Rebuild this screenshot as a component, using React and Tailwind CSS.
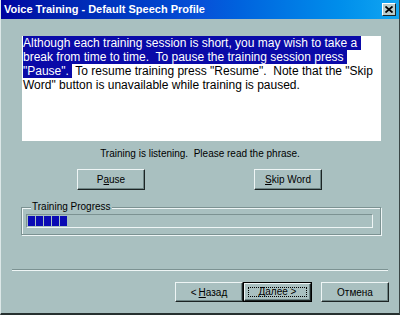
import React from 'react'

const font = { fontFamily: '"Liberation Sans", Arial, sans-serif' }

function Button({ children, className = '', isDefault = false }) {
  if (isDefault) {
    return (
      <div className={`h-[20px] border border-black ${className}`}>
        <div className="h-full flex items-center justify-center border-t border-l border-t-[#eef5f5] border-l-[#eef5f5] border-r border-b border-r-[#1c2424] border-b-[#1c2424] shadow-[inset_-1px_-1px_0_#6f8585]">
          <span className="flex items-center justify-center w-[calc(100%-6px)] h-[calc(100%-6px)] border border-dotted border-black leading-none">
            {children}
          </span>
        </div>
      </div>
    )
  }
  return (
    <div
      className={`flex items-center justify-center border-t border-l border-t-[#eef5f5] border-l-[#eef5f5] border-r border-b border-r-[#1c2424] border-b-[#1c2424] shadow-[inset_-1px_-1px_0_#6f8585] ${className}`}
    >
      {children}
    </div>
  )
}

export default function App() {
  const hl = 'bg-[#0a0aa8] text-white'

  return (
    <div
      className="w-[400px] h-[315px] bg-[#a9c0c0] border-l border-l-[#dde8e8] border-r border-r-[#3a4646] border-b-2 border-b-[#26302f] flex flex-col text-black text-[10px]"
      style={font}
    >
      {/* Title bar */}
      <div className="h-[19px] flex items-center justify-between pl-[3px] pr-[3px] bg-gradient-to-r from-[#0000a0] via-[#0850d8] to-[#12a6f2]">
        <span className="text-white font-bold text-[11px] leading-none">Voice Training - Default Speech Profile</span>
        <div className="w-[14px] h-[13px] flex items-center justify-center bg-[#b9cccc] border-t border-l border-t-white border-l-white border-r border-b border-r-[#1c2424] border-b-[#1c2424]">
          <svg width="8" height="7" viewBox="0 0 8 7">
            <path d="M0.5 0.5 L7.5 6.5 M7.5 0.5 L0.5 6.5" stroke="#000" strokeWidth="1.8" />
          </svg>
        </div>
      </div>

      {/* Instruction text */}
      <div className="mt-[17px] ml-[21px] w-[359px] h-[105px] bg-white pl-[1px] text-[12px] leading-[14px] whitespace-pre">
        <div><span className={hl}>Although each training session is short, you may wish to take a </span></div>
        <div><span className={hl}>break from time to time.  To pause the training session press </span></div>
        <div><span className={hl}>"Pause". </span> To resume training press "Resume".  Note that the "Skip</div>
        <div>Word" button is unavailable while training is paused.</div>
      </div>

      {/* Status */}
      <div className="mt-[6px] h-[14px] leading-[14px] text-center whitespace-pre">
        Training is listening.  Please read the phrase.
      </div>

      {/* Pause / Skip */}
      <div className="mt-[8px] ml-[76px] flex gap-[109px]">
        <Button className="w-[68px] h-[21px]">
          P<span className="underline">a</span>use
        </Button>
        <Button className="w-[68px] h-[21px]">
          <span className="underline">S</span>kip Word
        </Button>
      </div>

      {/* Progress group */}
      <fieldset className="mt-[11px] ml-[20px] w-[360px] border border-[#7c9292] shadow-[inset_1px_1px_0_#eef5f5,1px_1px_0_#eef5f5] px-[4px] pb-[6px]">
        <legend className="ml-[5px] px-[1px] leading-[12px] bg-[#a9c0c0]">Training Progress</legend>
        <div className="mt-[1px] w-[347px] h-[14px] border-t border-l border-t-[#7c9292] border-l-[#7c9292] border-r border-b border-r-[#eef5f5] border-b-[#eef5f5] flex items-center pl-[1px] gap-[1px]">
          {[0, 1, 2, 3, 4].map((i) => (
            <div key={i} className="w-[7px] h-[10px] bg-[#0a0ab4]" />
          ))}
        </div>
      </fieldset>

      {/* Separator */}
      <div className="mt-[34px] ml-[11px] w-[376px] border-t border-t-[#7c9292] border-b border-b-[#eef5f5]" />

      {/* Wizard buttons */}
      <div className="mt-[11px] flex justify-end pr-[10px]">
        <Button className="w-[68px] h-[20px]">
          &lt; <span className="underline ml-[2px]">Н</span>азад
        </Button>
        <Button isDefault className="w-[69px] ml-[0px]">
          Далее &gt;
        </Button>
        <Button className="w-[68px] h-[20px] ml-[9px]">
          Отмена
        </Button>
      </div>
    </div>
  )
}
